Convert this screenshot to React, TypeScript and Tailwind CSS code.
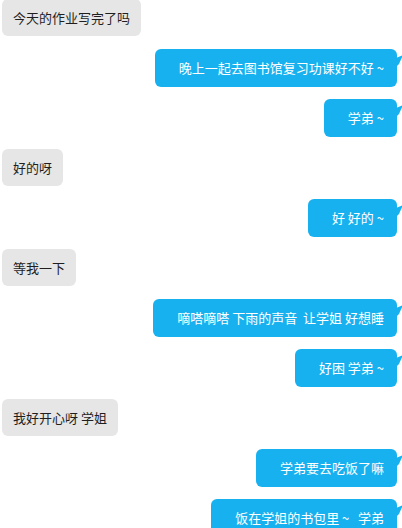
import React from 'react'

type Msg = { side: 'l' | 'r'; text: string }

const MSGS: Msg[] = [
  { side: 'l', text: '今天的作业写完了吗' },
  { side: 'r', text: '晚上一起去图书馆复习功课好不好 ~' },
  { side: 'r', text: '学弟 ~' },
  { side: 'l', text: '好的呀' },
  { side: 'r', text: '好 好的 ~' },
  { side: 'l', text: '等我一下' },
  { side: 'r', text: '嘀嗒嘀嗒 下雨的声音  让学姐 好想睡' },
  { side: 'r', text: '好困 学弟 ~' },
  { side: 'l', text: '我好开心呀 学姐' },
  { side: 'r', text: '学弟要去吃饭了嘛' },
  { side: 'r', text: '饭在学姐的书包里 ~   学弟' },
]

function Bubble({ m }: { m: Msg }) {
  if (m.side === 'l') {
    return (
      <div className="flex h-[50px] pl-[2px]">
        <div className="h-[37px] rounded-[6px] bg-[#e6e6e6] px-[11px] text-[13px] leading-[37px] whitespace-pre text-[#1f1f1f]">
          {m.text}
        </div>
      </div>
    )
  }
  return (
    <div className="flex h-[50px] justify-end pr-[5px]">
      <div className="relative h-[38px] rounded-[6px] bg-[#18b1ef] pl-[24px] pr-[13px] text-[13px] leading-[38px] whitespace-pre text-white">
        {m.text}
        <svg
          className="absolute top-[6px] right-[-6px]"
          width="7"
          height="14"
          viewBox="0 0 7 14"
        >
          <path d="M0 3 L7 0 L3 9 L0 12 Z" fill="#18b1ef" />
        </svg>
      </div>
    </div>
  )
}

export default function App() {
  return (
    <div
      className="h-[528px] w-[402px] overflow-hidden bg-white"
      style={{ fontFamily: '"Noto Sans CJK SC", "Liberation Sans", sans-serif' }}
    >
      <div className="-mt-[1px] flex flex-col">
        {MSGS.map((m, i) => (
          <Bubble key={i} m={m} />
        ))}
      </div>
    </div>
  )
}
